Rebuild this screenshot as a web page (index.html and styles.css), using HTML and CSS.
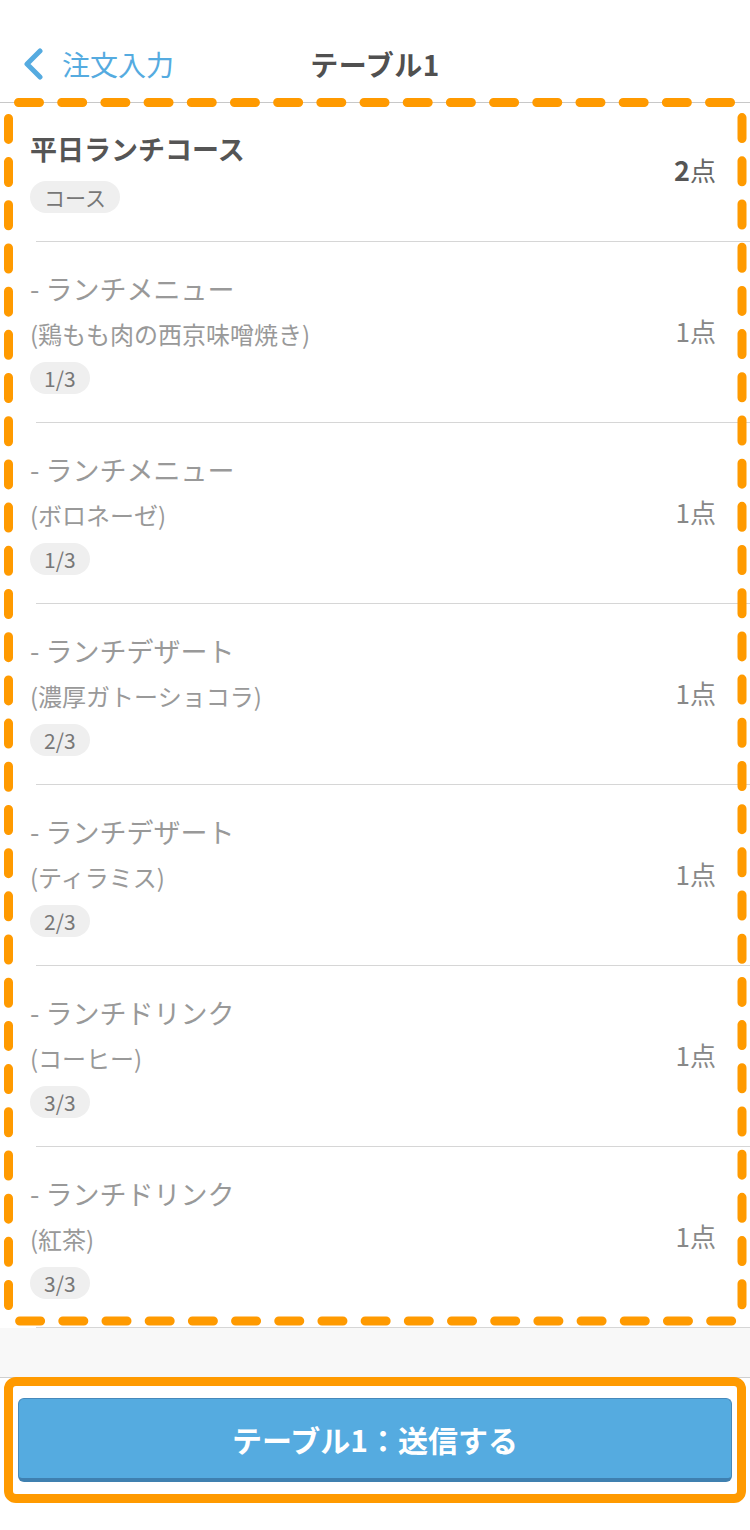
FILE: index.html
```html
<!DOCTYPE html>
<html>
<head lang="ja">
	<meta charset="UTF-8">
	<title>テーブル1</title>
	<link rel="stylesheet" href="styles.css">
</head>
<body>
<div class="screen">
	<!-- ナビゲーション -->
	<header class="nav">
		<a class="nav_back">
			<svg class="nav_chevron" width="22" height="32" viewBox="0 0 22 32"><path d="M18 3 L5 16 L18 29" fill="none" stroke="#55abe0" stroke-width="5" stroke-linecap="round" stroke-linejoin="round"/></svg>
			<span>注文入力</span>
		</a>
		<h1 class="nav_title">テーブル1</h1>
		<div></div>
	</header>

	<!-- 注文リスト -->
	<ul class="order_list">
		<li class="order_item course">
			<div class="order_info">
				<p class="order_name">平日ランチコース</p>
				<span class="tag">コース</span>
			</div>
			<p class="order_qty"><b>2</b>点</p>
		</li>
		<li class="order_item">
			<div class="order_info">
				<p class="order_name">- ランチメニュー</p>
				<p class="order_detail">(鶏もも肉の西京味噌焼き)</p>
				<span class="tag">1/3</span>
			</div>
			<p class="order_qty">1点</p>
		</li>
		<li class="order_item">
			<div class="order_info">
				<p class="order_name">- ランチメニュー</p>
				<p class="order_detail">(ボロネーゼ)</p>
				<span class="tag">1/3</span>
			</div>
			<p class="order_qty">1点</p>
		</li>
		<li class="order_item">
			<div class="order_info">
				<p class="order_name">- ランチデザート</p>
				<p class="order_detail">(濃厚ガトーショコラ)</p>
				<span class="tag">2/3</span>
			</div>
			<p class="order_qty">1点</p>
		</li>
		<li class="order_item">
			<div class="order_info">
				<p class="order_name">- ランチデザート</p>
				<p class="order_detail">(ティラミス)</p>
				<span class="tag">2/3</span>
			</div>
			<p class="order_qty">1点</p>
		</li>
		<li class="order_item">
			<div class="order_info">
				<p class="order_name">- ランチドリンク</p>
				<p class="order_detail">(コーヒー)</p>
				<span class="tag">3/3</span>
			</div>
			<p class="order_qty">1点</p>
		</li>
		<li class="order_item">
			<div class="order_info">
				<p class="order_name">- ランチドリンク</p>
				<p class="order_detail">(紅茶)</p>
				<span class="tag">3/3</span>
			</div>
			<p class="order_qty">1点</p>
		</li>
	</ul>

	<div class="spacer"></div>

	<!-- 送信ボタン -->
	<div class="footer">
		<button class="send_btn">テーブル1：送信する</button>
	</div>

	<!-- 注釈の枠 -->
	<svg class="mark_list" width="750" height="1340" viewBox="0 0 750 1340">
		<rect x="8.5" y="102.5" width="733.5" height="1218.5" rx="10" fill="none" stroke="#ff9a00" stroke-width="9" stroke-linecap="round" stroke-dasharray="21 22.19"/>
	</svg>
	<div class="mark_footer"></div>
</div>
</body>
</html>
```

FILE: styles.css
```css
*{
	margin:0;
	padding:0;
	box-sizing:border-box;
	font-family:"Noto Sans CJK JP","Noto Sans",sans-serif;
}
body{
	background:#fff;
}
.screen{
	position:relative;
	width:750px;
	height:1530px;
	overflow:hidden;
}
.nav{
	height:103px;
	padding-top:26px;
	display:grid;
	grid-template-columns:1fr auto 1fr;
	align-items:center;
	border-bottom:1px solid #c8c8c8;
}
.nav_back{
	display:flex;
	align-items:center;
	gap:18px;
	padding-left:22px;
	color:#55abe0;
	font-size:28px;
}
.nav_chevron{
	display:block;
}
.nav_title{
	font-size:28px;
	font-weight:bold;
	color:#505050;
	letter-spacing:0.5px;
}
.order_list{
	list-style:none;
}
.order_item{
	display:flex;
	align-items:center;
	justify-content:space-between;
	padding:24px 34px 29px 30px;
	background:linear-gradient(#d6d6d6,#d6d6d6) no-repeat 36px 100% / calc(100% - 36px) 1px;
}
.order_item.course{
	padding-top:23px;
	padding-bottom:29px;
}
.order_info{
	display:flex;
	flex-direction:column;
	align-items:flex-start;
}
.order_name{
	font-size:27px;
	line-height:45px;
	color:#999;
}
.order_detail{
	font-size:24px;
	line-height:45px;
	color:#999;
}
.course .order_name{
	font-weight:bold;
	color:#555;
}
.tag{
	display:block;
	height:32px;
	line-height:32px;
	padding:0 14px;
	border-radius:16px;
	background:#efefef;
	color:#777;
	font-size:21px;
	margin-top:6px;
}
.course .tag{
	margin-top:10px;
}
.order_qty{
	font-size:26px;
	color:#888;
}
.course .order_qty{
	color:#666;
}
.course .order_qty b{
	color:#555;
	font-size:27px;
}
.spacer{
	height:49px;
	background:#f8f8f8;
}
.footer{
	border-top:1px solid #cfcfcf;
	padding:20px 18px 0;
	height:153px;
}
.send_btn{
	display:block;
	width:100%;
	height:84px;
	border:1px solid #4689bb;
	border-bottom:4px solid #3f80b0;
	border-radius:6px;
	background:#55abe0;
	color:#fff;
	font-size:30px;
	font-weight:bold;
}
.mark_list{
	position:absolute;
	left:0;
	top:0;
	pointer-events:none;
}
.mark_footer{
	position:absolute;
	left:4px;
	top:1377px;
	width:742px;
	height:126px;
	border:9px solid #ff9a00;
	border-radius:12px;
	pointer-events:none;
}
```
